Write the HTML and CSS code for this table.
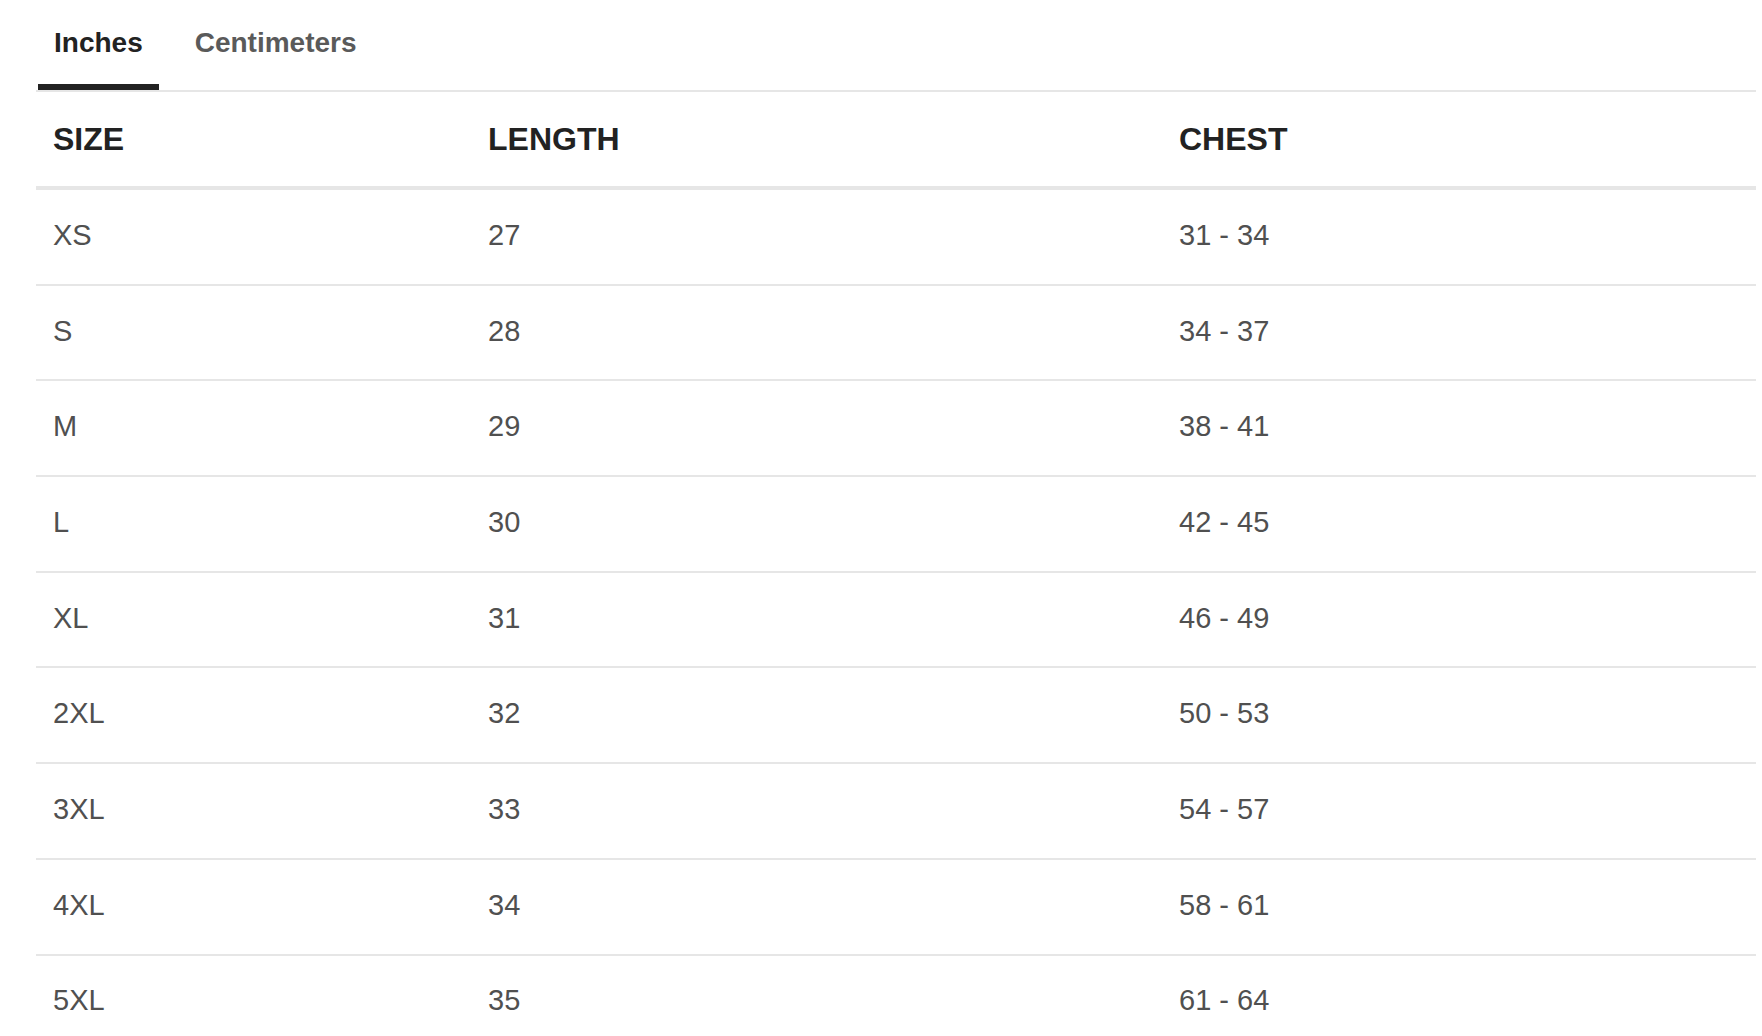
FILE: index.html
```html
<!DOCTYPE html>
<html lang="en">
<head>
<meta charset="utf-8">
<title>Size chart</title>
<link rel="stylesheet" href="styles.css">
</head>
<body>
<div class="size-chart">
  <div class="tabs">
    <button class="tab active">Inches</button>
    <button class="tab">Centimeters</button>
  </div>
  <div class="table">
    <div class="row head">
      <div class="cell">SIZE</div>
      <div class="cell">LENGTH</div>
      <div class="cell">CHEST</div>
    </div>
    <div class="row"><div class="cell">XS</div><div class="cell">27</div><div class="cell">31 - 34</div></div>
    <div class="row"><div class="cell">S</div><div class="cell">28</div><div class="cell">34 - 37</div></div>
    <div class="row"><div class="cell">M</div><div class="cell">29</div><div class="cell">38 - 41</div></div>
    <div class="row"><div class="cell">L</div><div class="cell">30</div><div class="cell">42 - 45</div></div>
    <div class="row"><div class="cell">XL</div><div class="cell">31</div><div class="cell">46 - 49</div></div>
    <div class="row"><div class="cell">2XL</div><div class="cell">32</div><div class="cell">50 - 53</div></div>
    <div class="row"><div class="cell">3XL</div><div class="cell">33</div><div class="cell">54 - 57</div></div>
    <div class="row"><div class="cell">4XL</div><div class="cell">34</div><div class="cell">58 - 61</div></div>
    <div class="row"><div class="cell">5XL</div><div class="cell">35</div><div class="cell">61 - 64</div></div>
  </div>
</div>
</body>
</html>
```

FILE: styles.css
```css
html, body {
  margin: 0;
  padding: 0;
  background: #ffffff;
}

body {
  font-family: "Liberation Sans", Arial, sans-serif;
  color: #222222;
}

.size-chart {
  margin-left: 36px;
  width: 1720px;
}

.tabs {
  display: flex;
  gap: 20px;
  padding-left: 2px;
  border-bottom: 2px solid #e6e6e6;
}

.tab {
  display: flex;
  align-items: center;
  box-sizing: border-box;
  height: 90px;
  padding: 2px 16px 0;
  margin: 0;
  border: 0;
  border-bottom: 6px solid transparent;
  background: none;
  font-family: "Liberation Sans", Arial, sans-serif;
  font-size: 28px;
  font-weight: 700;
  color: #5a5a5a;
  cursor: pointer;
}

.tab.active {
  color: #222222;
  border-bottom-color: #222222;
}

.table {
  display: flex;
  flex-direction: column;
}

.row {
  display: grid;
  grid-template-columns: 435px 691px 1fr;
  align-items: center;
  box-sizing: border-box;
  height: 95.7px;
  border-bottom: 2px solid #e6e6e6;
  font-size: 29px;
  color: #505050;
  padding-bottom: 3px;
}

.row.head {
  height: 98px;
  border-bottom: 4px solid #e6e6e6;
  font-size: 32px;
  font-weight: 700;
  color: #222222;
  padding-bottom: 0;
}

.cell {
  padding-left: 17px;
  white-space: nowrap;
}
```
